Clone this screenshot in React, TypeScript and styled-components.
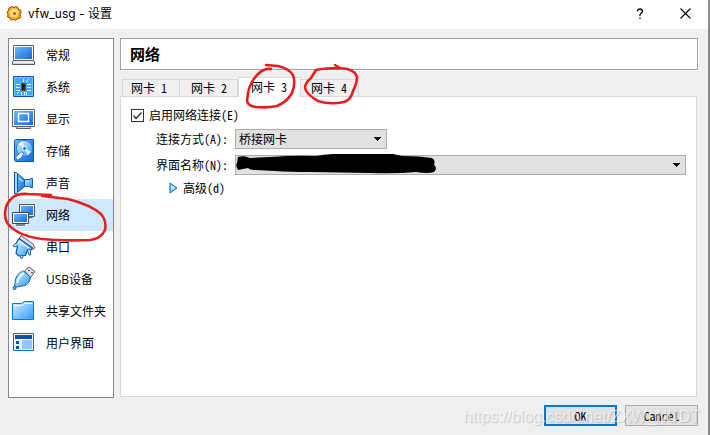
import React from "react";
import styled, { createGlobalStyle, css } from "styled-components";

const GlobalStyle = createGlobalStyle`
  * { box-sizing: border-box; }
  body { margin: 0; }
  button, input, select { font: inherit; color: inherit; margin: 0; }
`;

const uiFont = css`font-family: "Open Sans", "Noto Sans CJK SC", sans-serif;`;
const halfWidthFont = css`
  font-family: "Noto Sans CJK SC", sans-serif;
  font-feature-settings: "hwid" 1;
`;

const Dialog = styled.div`
  position: relative;
  display: flex;
  flex-direction: column;
  min-height: 100vh;
  background: #efefef;
  border-right: 2px solid #8c8c8c;
  color: #000;
  font-size: 12px;
  line-height: 16px;
  overflow: hidden;
  ${uiFont}
`;
const TitleBar = styled.header`
  display: flex;
  align-items: center;
  height: 29px;
  padding: 0 9px 2px 6px;
  background: #fff;
`;
const Title = styled.h1`
  flex: 1;
  margin: 0 0 0 5px;
  font-family: Inter, "Noto Sans CJK SC", sans-serif;
  font-size: 12px;
  font-weight: 400;
`;
const WindowButton = styled.button`
  display: grid;
  place-items: center;
  width: 28px;
  height: 24px;
  margin-left: 17px;
  padding: 0;
  border: 0;
  background: none;
`;
const Body = styled.div`
  flex: 1;
  display: flex;
  gap: 6px;
  padding: 9px 10px 0 8px;
`;
const Sidebar = styled.nav`
  width: 106px;
  flex: none;
  background: #fff;
  border: 1px solid #828790;
`;
const NavItem = styled.button<{ $selected?: boolean }>`
  position: relative;
  display: flex;
  align-items: center;
  gap: 9px;
  width: 100%;
  height: 32px;
  padding: 0 0 0 3px;
  border: 0;
  background: ${(p) => (p.$selected ? "#cde8ff" : "transparent")};
  white-space: nowrap;
  text-align: left;
  svg { flex: none; }
`;
const NavLabel = styled.span`
  padding-top: 2px;
`;
const Main = styled.main`
  flex: 1;
  min-width: 0;
  display: flex;
  flex-direction: column;
`;
const Heading = styled.h2`
  height: 32px;
  margin: 0;
  padding: 0 9px;
  border: 1px solid #a0a0a0;
  box-shadow: 1px 1px #fff;
  background: #fff;
  font-size: 15px;
  line-height: 31px;
`;
const TabList = styled.div`
  display: flex;
  align-items: flex-end;
  margin-top: 7px;
  padding-left: 2px;
  ${halfWidthFont}
`;
const Tab = styled.button<{ $active?: boolean }>`
  position: relative;
  width: ${(p) => (p.$active ? 63 : 58)}px;
  height: ${(p) => (p.$active ? 20 : 17)}px;
  margin-bottom: ${(p) => (p.$active ? "-1px" : "0")};
  padding: ${(p) => (p.$active ? "0 0 2px 12px" : "0 0 0 10px")};
  border: 1px solid #d9d9d9;
  border-width: ${(p) => (p.$active ? "1px 1px 0" : "1px 1px 0 0")};
  background: ${(p) => (p.$active ? "#fff" : "#f0f0f0")};
  text-align: left;
  line-height: 16px;
  white-space: nowrap;
  &:first-child { padding-left: 8px; border-left-width: 1px; }
  &:nth-child(2) { padding-left: 11px; }
`;
const Panel = styled.section`
  flex: 1;
  margin: 0 1px 1px 0;
  padding: 11px 10px;
  border: 1px solid #d9d9d9;
  background: #fff;
  ${halfWidthFont}
`;
const CheckLabel = styled.label`
  display: flex;
  align-items: center;
  gap: 5px;
  height: 14px;
`;
const CheckWrap = styled.span`
  display: grid;
  width: 13px;
  height: 13px;
  > * { grid-area: 1 / 1; }
  svg { pointer-events: none; visibility: hidden; z-index: 1; }
  input:checked + svg { visibility: visible; }
`;
const CheckBox = styled.input`
  appearance: none;
  width: 13px;
  height: 13px;
  border: 1px solid #333;
  background: #fff;
`;
const Form = styled.div`
  display: grid;
  grid-template-columns: 97px 1fr;
  gap: 6px 7px;
  align-items: center;
  margin-top: 7px;
`;
const FieldLabel = styled.label`
  justify-self: end;
  white-space: nowrap;
`;
const SelectWrap = styled.span<{ $compact?: boolean }>`
  position: relative;
  display: grid;
  align-items: center;
  ${(p) => p.$compact && "width: 152px;"}
  > select, > .arrow { grid-area: 1 / 1; }
  > .arrow { justify-self: end; margin-right: 6px; pointer-events: none; z-index: 1; }
`;
const Select = styled.select`
  appearance: none;
  width: 100%;
  height: 20px;
  padding: 0 20px 0 3px;
  border: 1px solid #adadad;
  border-radius: 0;
  background: #e1e1e1;
`;
const Advanced = styled.button`
  display: flex;
  align-items: center;
  gap: 5px;
  height: 18px;
  margin: 4px 0 0 38px;
  padding: 0;
  border: 0;
  background: none;
`;
const Footer = styled.footer`
  position: relative;
  display: flex;
  justify-content: flex-end;
  gap: 8px;
  padding: 7px 10px 9px;
  ${halfWidthFont}
`;
const ActionButton = styled.button<{ $primary?: boolean }>`
  width: 73px;
  height: 21px;
  padding: 0;
  border: ${(p) => (p.$primary ? "2px solid #0078d7" : "1px solid #adadad")};
  background: #e1e1e1;
`;
const Watermark = styled.span`
  position: absolute;
  right: 8px;
  bottom: 8px;
  font: 16px/20px "Liberation Sans", sans-serif;
  font-feature-settings: normal;
  color: rgba(255, 255, 255, 0.6);
  text-shadow: 1px 1px 1px rgba(120, 120, 120, 0.35);
  pointer-events: none;
`;
const Marker = styled.svg<{ $x: number; $y: number }>`
  position: absolute;
  left: ${(p) => p.$x}px;
  top: ${(p) => p.$y}px;
  z-index: 2;
  fill: none;
  stroke: #e81e1e;
  stroke-width: 2.6;
  stroke-linecap: round;
  stroke-linejoin: round;
  pointer-events: none;
`;
const Redaction = styled.svg`
  position: absolute;
  left: 0;
  top: -1px;
  z-index: 1;
  pointer-events: none;
`;

const Icon = ({ id, children }: { id: string; children: React.ReactNode }) => (
  <svg width="25" height="26" viewBox="0 0 25 26" aria-hidden="true">
    <defs>
      <linearGradient id={`${id}-b`} x1="0" y1="0" x2="1" y2="1">
        <stop offset="0" stopColor="#6dbbff" />
        <stop offset="1" stopColor="#1268dc" />
      </linearGradient>
      <linearGradient id={`${id}-l`} x1="0" y1="0" x2="1" y2="1">
        <stop offset="0" stopColor="#d9f1ff" />
        <stop offset="1" stopColor="#2c9af5" />
      </linearGradient>
    </defs>
    {children}
  </svg>
);

const b = (id: string) => `url(#${id}-b)`;
const l = (id: string) => `url(#${id}-l)`;

const icons: Record<string, React.ReactNode> = {
  general: (
    <Icon id="general">
      <path d="M1.5 3.5h20v15h-20z" fill="#fff" stroke="#5a5a5a" />
      <path d="M3 5h17v12H3z" fill={b("general")} />
      <path d="M1.5 18.5h20l1 1v3h-22v-3z" fill="#d4d4d4" stroke="#5a5a5a" />
      <path d="M2 20h19" stroke="#fff" />
    </Icon>
  ),
  system: (
    <Icon id="system">
      <path d="M1.5 2.5h20v20h-20z" fill="#45a8f7" stroke="#0756b3" />
      <path d="M2.5 3.5h18v18h-18z" fill="none" stroke="#79c2fb" />
      <path d="M9.5 9.5h4v7h-4z" fill="#222" stroke="#555" />
      <path d="M4 10.5h4M4 13.5h4M4 16.5h4M15 10.5h4M15 13.5h4M15 16.5h4M9.5 18v3M12.5 18v3M14.5 18v3M11.5 5v3M14 8l3-3M5 20l2-2" stroke="#e9f7ff" />
    </Icon>
  ),
  display: (
    <Icon id="display">
      <path d="M.5 3.5h22v17H.5z" fill="#fff" stroke="#5a5a5a" />
      <path d="M2 5h19v14H2z" fill={b("display")} />
      <path d="M6.5 7.500h10v8h-10z" fill="none" stroke="#fff" strokeWidth="1.400" />
      <path d="M5.5 20.500h12l1 2h-14z" fill="#ddd" stroke="#5a5a5a" />
    </Icon>
  ),
  storage: (
    <Icon id="storage">
      <path d="M3.5 1.500h18v22h-18l-1-1v-20z" fill={b("storage")} stroke="#0757a8" />
      <circle cx="12.5" cy="10.5" r="8" fill={l("storage")} stroke="#0f66b8" strokeWidth=".7" />
      <path d="M12.5 10.500L6 6a8 8 0 0 1 5-3zM12.500 10.500l7 3-4 4z" fill="#fff" opacity=".7" />
      <circle cx="12.5" cy="10.5" r="2" fill="#1773c5" stroke="#fff" />
      <path d="M9 14l3 1-3 5-4 2-1-3z" fill="#fff" stroke="#2375bd" strokeWidth=".7" />
    </Icon>
  ),
  sound: (
    <Icon id="sound">
      <path d="M11.5 9.5h7v-1h2v9h-2v-1h-7z" fill={l("sound")} stroke="#1262b4" />
      <path d="M5.5 3.5l7 6v7l-7 6z" fill={b("sound")} stroke="#0957a2" />
      <path d="M2.5 2.5h2l1 1v19l-1 1h-2z" fill="#a9dbff" stroke="#0957a2" />
      <path d="M7 8.500l4 3" stroke="#b9e4ff" strokeWidth="1.500" />
    </Icon>
  ),
  network: (
    <Icon id="network">
      <path d="M7.5 2.500h15v12h-15z" fill="#eee" stroke="#555" />
      <path d="M9 4h12v9H9z" fill={b("network")} />
      <path d="M17 15.500h3.500" stroke="#666" strokeWidth="1.500" />
      <path d="M.5 10.500h16v11H.5z" fill="#fff" stroke="#444" />
      <path d="M2 12h13v8H2z" fill={b("network")} />
      <path d="M4 23h9" stroke="#666" strokeWidth="1.500" />
    </Icon>
  ),
  serial: (
    <Icon id="serial">
      <path d="M9 1.5l12 8.5 2 4-2 1.500L7 5z" fill="#ddd" stroke="#555" strokeWidth=".9" />
      <path d="M7 4.500L20.500 14l-1.500 2-3.500 0-2 5.500-7 .5-2.500-3 1.500-7L4 9.500z" fill={l("serial")} stroke="#0757a8" strokeWidth="1.2" />
      <path d="M4.500 9L1 11.500l1 1.500 3.500-1M15.500 16l1.500 5 1.500 0 0-5M8 22l1 2.500 1.500-.5.500-2" fill="#bfe5ff" stroke="#0757a8" strokeWidth=".9" />
      <path d="M7.500 7.500l9.500 6.500" stroke="#f0faff" strokeWidth="1.500" />
    </Icon>
  ),
  usb: (
    <Icon id="usb">
      <path d="M12.5 5l4.500-4 6 4.500-4.500 6z" fill="#e8e8e8" stroke="#555" />
      <path d="M16.5 4l1 1M19.500 6l1 1" stroke="#333" strokeWidth="1.400" />
      <path d="M11.5 5l7 6c-1 6-4 9-9 9l-5 1-2-1c1-3 0-6 2-9 2-4 4-5 7-6z" fill={l("usb")} stroke="#075da8" />
      <path d="M12 7c-5 3-6 6-7 10" stroke="#edfaff" strokeWidth="2" fill="none" />
      <circle cx="2.5" cy="22" r="1.5" fill="#65c6ff" stroke="#075da8" />
    </Icon>
  ),
  folder: (
    <Icon id="folder">
      <path d="M.5 5.500h9l3-2h9v18H.5z" fill={l("folder")} stroke="#1676c8" />
      <path d="M12.5 5.500h8M1.500 7.500h9l2-2" fill="none" stroke="#f0faff" />
    </Icon>
  ),
  ui: (
    <Icon id="ui">
      <path d="M1.5 3.500h20v17h-20z" fill="#eaf5ff" stroke="#1268bd" />
      <path d="M3 5h17v4H3z" fill="#0a52aa" />
      <path d="M4 11h3v3H4zM4 16h3v3H4z" fill="#0955ae" />
      <path d="M10 10h10v9H10z" fill="#93c5ff" />
    </Icon>
  ),
};

const items: [string, string][] = [
  ["general", "常规"], ["system", "系统"], ["display", "显示"], ["storage", "存储"],
  ["sound", "声音"], ["network", "网络"], ["serial", "串口"], ["usb", "USB设备"],
  ["folder", "共享文件夹"], ["ui", "用户界面"],
];

const Arrow = () => (
  <svg className="arrow" width="7" height="4" viewBox="0 0 7 4" shapeRendering="crispEdges" aria-hidden="true">
    <path d="M0 0h7v1h-1v1h-1v1h-1v1h-1v-1h-1v-1h-1v-1h-1z" fill="#000" />
  </svg>
);

export default function App() {
  return (
    <Dialog>
      <GlobalStyle />
      <TitleBar>
        <svg width="17" height="17" viewBox="0 0 17 17" aria-hidden="true">
          <path d="M6 1.5l2 1 2-1 2 1 .5 2 2.5.8V8l-1 1.5 1 2-1.5 2-2.5.5-1.500 1.500-2-1-2.500.5-1-2-2.500-1 .5-2.500L1 7l1.500-1.500L3 3z" fill="#f9a51a" stroke="#925009" />
          <circle cx="8" cy="8" r="4.5" fill="#ffd884" />
          <circle cx="8.5" cy="8.5" r="1.5" fill="#9b6526" />
        </svg>
        <Title>vfw_usg - 设置</Title>
        <WindowButton aria-label="帮助">
          <svg width="8" height="12" viewBox="0 0 8 12">
            <path d="M1.5 3.500V2.500Q2 1 4 1t2.500 2Q6.500 4.500 5 5.500T4 8M4 9.500v1.500" fill="none" stroke="#000" strokeWidth="1.3" />
          </svg>
        </WindowButton>
        <WindowButton aria-label="关闭">
          <svg width="11" height="11" viewBox="0 0 11 11">
            <path d="M.5.5l10 10M10.5.5l-10 10" stroke="#000" strokeWidth="1.1" />
          </svg>
        </WindowButton>
      </TitleBar>
      <Body>
        <Sidebar>
          {items.map(([id, label]) => (
            <NavItem key={id} $selected={id === "network"}>
              {icons[id]}
              <NavLabel>{label}</NavLabel>
              {id === "network" && (
                <Marker $x={-9} $y={-10} width="114" height="60" viewBox="0 189 114 60">
                  <path d="M51 195L28 194Q17 193 12 198C3 206 4 218 8 224Q18 236 42 239Q60 241 90 240Q101 239 105 230Q107 221 101 214Q91 205 68 199L42 196" />
                </Marker>
              )}
            </NavItem>
          ))}
        </Sidebar>
        <Main>
          <Heading>网络</Heading>
          <TabList role="tablist">
            <Tab role="tab">网卡 1</Tab>
            <Tab role="tab">网卡 2</Tab>
            <Tab role="tab" $active aria-selected>
              网卡 3
              <Marker $x={1} $y={-16} width="62" height="50" viewBox="240 62 62 50">
                <path d="M271 69Q264 68 258 74Q250 82 248 93L247 101Q248 106 256 107Q268 108 277 106Q287 102 292 93Q296 83 293 75Q288 68 278 66L266 65" />
              </Marker>
            </Tab>
            <Tab role="tab">
              网卡 4
              <Marker $x={-1} $y={-19} width="62" height="48" viewBox="300 61 62 48">
                <path d="M335 65L340 68Q355 69 357 77Q357 83 353 91Q351 100 344 102Q330 105 318 101Q307 95 305 88Q305 83 311 78L316 70Q325 68 340 68" />
              </Marker>
            </Tab>
          </TabList>
          <Panel>
            <CheckLabel>
              <CheckWrap>
                <CheckBox type="checkbox" defaultChecked />
                <svg width="13" height="13" viewBox="0 0 13 13">
                  <path d="M2.500 6.500L5 9.500l5.500-6" fill="none" stroke="#222" strokeWidth="1.2" />
                </svg>
              </CheckWrap>
              启用网络连接(E)
            </CheckLabel>
            <Form>
              <FieldLabel htmlFor="mode">连接方式(A):</FieldLabel>
              <SelectWrap $compact>
                <Select id="mode"><option>桥接网卡</option></Select>
                <Arrow />
              </SelectWrap>
              <FieldLabel htmlFor="iface">界面名称(N):</FieldLabel>
              <SelectWrap>
                <Select id="iface"><option></option></Select>
                <Arrow />
                <Redaction width="204" height="20" viewBox="235 154 204 20" aria-hidden="true">
                  <path d="M238 157Q244 155 250 158L270 157Q295 155 316 156Q332 153 350 154H393L402 156Q420 156 432 158Q436 160 434 165Q438 168 434 172Q428 174 416 172Q395 174 370 173L310 172Q290 172 275 171L256 170Q250 170 248 168L238 170Q235 165 237 163Z" fill="#000" />
                </Redaction>
              </SelectWrap>
            </Form>
            <Advanced>
              <svg width="9" height="12" viewBox="0 0 9 12" aria-hidden="true">
                <path d="M1 1v10l7-5z" fill="#8dd0ff" stroke="#0b65bd" />
                <path d="M2.500 3v4l3-1z" fill="#dff4ff" />
              </svg>
              高级(d)
            </Advanced>
          </Panel>
        </Main>
      </Body>
      <Footer>
        <ActionButton $primary>OK</ActionButton>
        <ActionButton>Cancel</ActionButton>
        <Watermark>https://blog.csdn.net/ZXW_NUDT</Watermark>
      </Footer>
    </Dialog>
  );
}
